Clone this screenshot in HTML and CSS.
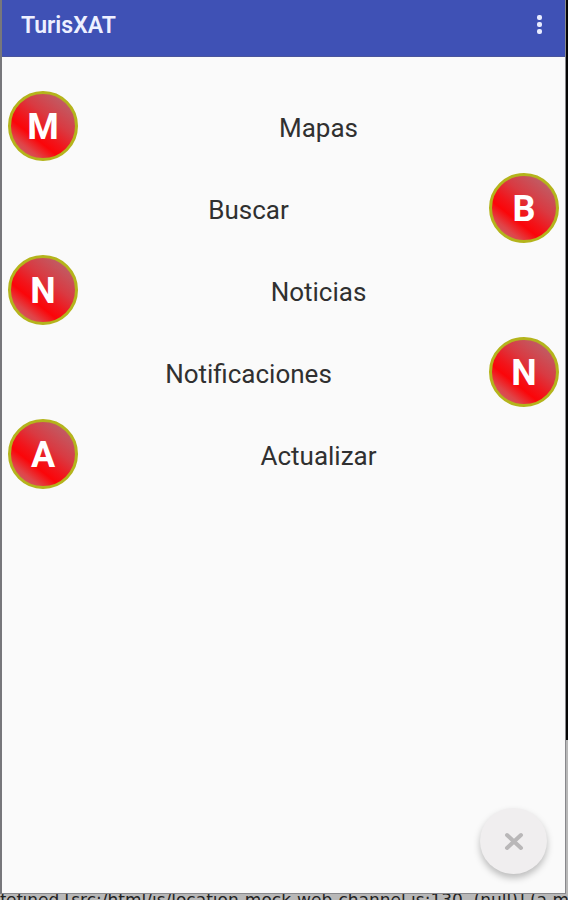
FILE: index.html
```
<!DOCTYPE html>
<html lang="es">
<head>
    <meta charset="UTF-8" />
    <meta name="viewport" content="width=device-width, initial-scale=1" />
    <title>TurisXAT</title>
    <link rel="stylesheet" href="styles.css">
</head>
<body>
    <div class="desktop">
        <div class="app">
            <header class="app-bar">
                <h1 class="app-title">TurisXAT</h1>
                <button type="button" class="menu-btn" aria-label="Menú">
                    <svg viewBox="0 0 8 24" width="8" height="24" fill="#e9ecff">
                        <rect x="1" y="2" width="5" height="5" rx="2"/>
                        <rect x="1" y="9" width="5" height="5" rx="2"/>
                        <rect x="1" y="16" width="5" height="5" rx="2"/>
                    </svg>
                </button>
            </header>
            <nav class="options">
                <a class="option" href="#mapas">
                    <span class="ball">M</span>
                    <span class="option-name">Mapas</span>
                </a>
                <a class="option reverse" href="#buscar">
                    <span class="ball">B</span>
                    <span class="option-name">Buscar</span>
                </a>
                <a class="option" href="#noticias">
                    <span class="ball">N</span>
                    <span class="option-name">Noticias</span>
                </a>
                <a class="option reverse" href="#notificaciones">
                    <span class="ball">N</span>
                    <span class="option-name">Notificaciones</span>
                </a>
                <a class="option" href="#actualizar">
                    <span class="ball">A</span>
                    <span class="option-name">Actualizar</span>
                </a>
            </nav>
            <button type="button" class="close-btn" aria-label="Cerrar">
                <svg viewBox="0 0 20 20" width="20" height="20" fill="none" stroke="#b9b7b8" stroke-width="4" stroke-linecap="round">
                    <path d="M3 4L17 17M17 4L3 17"/>
                </svg>
            </button>
        </div>
        <div class="edge"></div>
    </div>
    <div class="console">fefined [src:/html/js/location-mock-web-channel.js:130, (null)] (a min</div>
</body>
</html>
```

FILE: styles.css
```
* {
    box-sizing: border-box;
}
body {
    margin: 0;
    height: 100vh;
    display: flex;
    flex-direction: column;
    overflow: hidden;
    background: #b8b8b8;
    font-family: Roboto, "Liberation Sans", sans-serif;
}
.desktop {
    flex: 1;
    display: flex;
    min-height: 0;
}
.app {
    position: relative;
    flex: 1;
    display: flex;
    flex-direction: column;
    background: #fafafa;
    border-left: 2px solid #77777b;
    border-right: 1px solid #88888c;
    border-bottom: 1px solid #88888c;
}
.app-bar {
    display: flex;
    align-items: center;
    justify-content: space-between;
    height: 57px;
    padding: 0 21px 6px 19px;
    background: #3f51b5;
    border-bottom: 1px solid #4a559c;
}
.app-title {
    margin: 0;
    font-size: 23px;
    font-weight: 600;
    color: #eef0ff;
}
.menu-btn {
    display: flex;
    padding: 0;
    border: none;
    background: none;
    cursor: pointer;
}
.options {
    display: flex;
    flex-direction: column;
    gap: 12px;
    padding: 34px 6px 0;
}
.option {
    display: flex;
    align-items: center;
    color: #303030;
    text-decoration: none;
}
.option.reverse {
    flex-direction: row-reverse;
}
.ball {
    display: flex;
    align-items: center;
    justify-content: center;
    width: 70px;
    height: 70px;
    padding-top: 2px;
    border: 3px solid #b4b41c;
    border-radius: 50%;
    background: linear-gradient(38deg, #d0585c 12%, #e04448 20%, #fb0509 34%, #f2141a 44%, #d93a42 62%, #c25a62 85%);
    color: #fff;
    font-size: 36px;
    font-weight: 700;
}
.option-name {
    flex: 1;
    padding-top: 4px;
    font-size: 26px;
    line-height: 32px;
    text-align: center;
}
.close-btn {
    position: absolute;
    right: 18px;
    bottom: 19px;
    display: flex;
    align-items: center;
    justify-content: center;
    width: 67px;
    height: 66px;
    padding: 0;
    border: none;
    border-radius: 50%;
    background: #f0eeef;
    box-shadow: 0 4px 7px rgba(0, 0, 0, 0.25);
    cursor: pointer;
}
.edge {
    width: 2px;
    height: 740px;
    background: #050505;
}
.console {
    height: 6px;
    overflow: hidden;
    font-family: "DejaVu Sans", sans-serif;
    font-size: 17px;
    line-height: 12px;
    white-space: nowrap;
    color: #222;
}
```
